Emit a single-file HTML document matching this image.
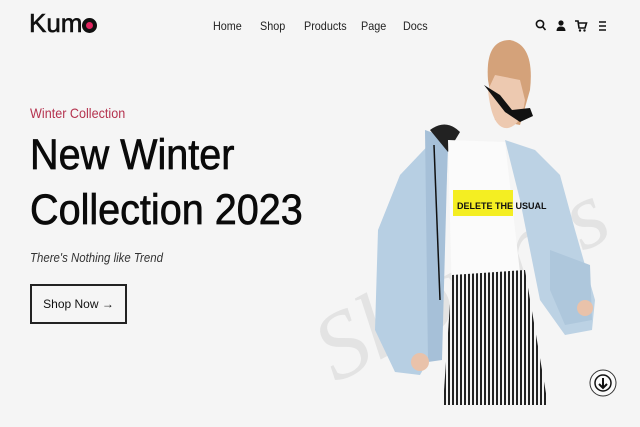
<!DOCTYPE html>
<html><head><meta charset="utf-8"><style>
*{margin:0;padding:0;box-sizing:border-box}
body{width:640px;height:427px;background:#f5f5f5;font-family:"Liberation Sans",sans-serif;position:relative;overflow:hidden;color:#111}
.logo{position:absolute;left:29px;top:8px;font-size:26px;color:#111;-webkit-text-stroke:0.6px #111}
.nav{position:absolute;top:19px;font-size:12px;color:#222;transform:scaleX(.9);transform-origin:left}
.h{position:absolute;left:30px;font-size:43px;line-height:48px;color:#0a0a0a;transform:scaleX(.92);transform-origin:left;white-space:nowrap;-webkit-text-stroke:0.7px #0a0a0a}
</style></head><body>
<svg style="position:absolute;left:0;top:0" width="640" height="427" viewBox="0 0 640 427">
<text x="270" y="320" font-family="Liberation Serif,serif" font-style="italic" font-size="95" fill="#e3e3e3" transform="rotate(-28 430 220)">Showhis</text>
</svg>
<div class="logo">Kum<span style="display:inline-block;width:15px;height:15px;border-radius:50%;background:#111;position:relative;top:1px"><span style="position:absolute;left:4px;top:4px;width:7px;height:7px;border-radius:50%;background:#e0245e"></span></span></div>
<div class="nav" style="left:213px">Home</div>
<div class="nav" style="left:260px">Shop</div>
<div class="nav" style="left:304px">Products</div>
<div class="nav" style="left:361px">Page</div>
<div class="nav" style="left:403px">Docs</div>
<svg style="position:absolute;left:535px;top:19px" width="75" height="14" viewBox="0 0 75 14">
<circle cx="5" cy="5" r="3.6" fill="none" stroke="#111" stroke-width="1.6"/><line x1="7.5" y1="7.5" x2="10.5" y2="11" stroke="#111" stroke-width="1.6"/>
<circle cx="26" cy="4" r="2.6" fill="#111"/><path d="M21.5 12 Q21.5 7.5 26 7.5 Q30.5 7.5 30.5 12Z" fill="#111"/>
<path d="M40 2 H43 L44 9 H50 L51.5 4 H43.5" fill="none" stroke="#111" stroke-width="1.6"/><circle cx="45" cy="11.5" r="1.2" fill="#111"/><circle cx="49.5" cy="11.5" r="1.2" fill="#111"/>
<path d="M64 3 H71 M64 7 H71 M64 11 H71" stroke="#111" stroke-width="1.6"/>
</svg>
<div style="position:absolute;left:30px;top:105px;font-size:14px;color:#b5334f;transform:scaleX(.9);transform-origin:left">Winter Collection</div>
<div class="h" style="top:131px">New Winter</div>
<div class="h" style="top:186px">Collection 2023</div>
<div style="position:absolute;left:30px;top:250px;font-size:13px;font-style:italic;color:#333;transform:scaleX(.88);transform-origin:left">There's Nothing like Trend</div>
<div style="position:absolute;left:30px;top:284px;width:97px;height:40px;border:2px solid #222;font-size:12px;text-align:center;line-height:36px">Shop Now →</div>
<svg style="position:absolute;left:0;top:0" width="640" height="427" viewBox="0 0 640 427">
<!-- jacket left -->
<path d="M438 135 L400 175 L378 230 L375 330 L395 372 L420 375 L440 340 L448 150Z" fill="#b7cfe3"/>
<path d="M425 130 L448 138 L442 360 L428 362 Z" fill="#a6c0d8"/>
<!-- jacket right -->
<path d="M505 140 L535 150 L560 175 L575 230 L595 300 L592 330 L565 335 L540 300 L520 200Z" fill="#bcd2e4"/>
<path d="M550 250 L590 265 L592 320 L565 325 L550 290Z" fill="#aec7dc"/>
<path d="M430 130 Q446 118 460 132 L448 152Z" fill="#222"/>
<line x1="434" y1="145" x2="440" y2="300" stroke="#111" stroke-width="1.5"/>
<!-- shirt -->
<path d="M448 140 L505 142 L522 290 L452 300 Z" fill="#fbfbfb"/>
<rect x="453" y="190" width="60" height="26" fill="#f4ee22"/>
<text x="457" y="209" font-size="9" font-weight="bold" fill="#111" font-family="Liberation Sans">DELETE THE USUAL</text>
<!-- pants -->
<defs><pattern id="st" width="4" height="4" patternUnits="userSpaceOnUse"><rect width="2" height="4" fill="#222"/><rect x="2" width="2" height="4" fill="#f5f5f5"/></pattern></defs>
<path d="M452 275 L525 270 L548 405 L443 405 Z" fill="url(#st)"/>
<!-- head -->
<path d="M488 80 Q485 40 510 40 Q535 45 530 90 L520 125 L495 120Z" fill="#d4a27a"/>
<path d="M488 90 Q492 130 508 128 Q522 125 525 100 L520 80 L495 75Z" fill="#edc9b0"/>
<path d="M484 85 L500 95 L512 110 L530 108 L533 116 L520 122 L505 112 Z" fill="#111"/>
<!-- hands -->
<circle cx="420" cy="362" r="9" fill="#e9c2aa"/>
<circle cx="585" cy="308" r="8" fill="#e9c2aa"/>
<!-- download button -->
<circle cx="603" cy="383" r="13" fill="#fafafa" stroke="#333" stroke-width="1"/>
<circle cx="603" cy="383" r="8" fill="none" stroke="#111" stroke-width="1.5"/>
<path d="M603 378 V388 M599 384 L603 388 L607 384" stroke="#111" stroke-width="2" fill="none"/>
</svg>
</body></html>
